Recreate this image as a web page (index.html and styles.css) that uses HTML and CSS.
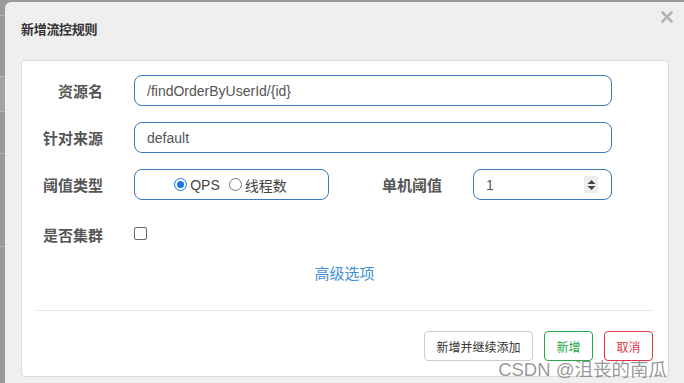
FILE: index.html
```html
<!DOCTYPE html>
<html lang="zh">
<head>
<meta charset="utf-8">
<title>新增流控规则</title>
<link rel="stylesheet" href="styles.css">
</head>
<body>
<div class="backdrop">
  <div class="bg-line l1"></div>
  <div class="bg-band"></div>
  <div class="bg-line l3"></div>
  <div class="bg-line l4"></div>
</div>
<div class="modal">
  <div class="modal-header">
    <h4 class="modal-title">新增流控规则</h4>
    <button class="close" type="button" aria-label="close">
      <svg width="12" height="12" viewBox="0 0 12 12"><path d="M1.5 1.5 L10.5 10.5 M10.5 1.5 L1.5 10.5" stroke="#b3b3b3" stroke-width="2.6" stroke-linecap="square"/></svg>
    </button>
  </div>
  <div class="card">
    <div class="form">
      <div class="row">
        <label class="label">资源名</label>
        <div class="input wide">/findOrderByUserId/{id}</div>
      </div>
      <div class="row">
        <label class="label">针对来源</label>
        <div class="input wide">default</div>
      </div>
      <div class="row">
        <label class="label">阈值类型</label>
        <div class="input radios">
          <span class="radio checked"></span><span class="rtext">QPS</span>
          <span class="radio"></span><span class="rtext">线程数</span>
        </div>
        <label class="label label2">单机阈值</label>
        <div class="input number">
          <span>1</span>
          <span class="spin">
            <svg width="13" height="16" viewBox="0 0 13 16"><path d="M2.5 7 L6.5 3 L10.5 7 Z M2.5 9 L6.5 13 L10.5 9 Z" fill="#444"/></svg>
          </span>
        </div>
      </div>
      <div class="row check-row">
        <label class="label">是否集群</label>
        <span class="checkbox"></span>
      </div>
      <div class="advanced"><a class="link">高级选项</a></div>
    </div>
    <div class="divider"></div>
    <div class="footer">
      <button class="btn btn-default">新增并继续添加</button>
      <button class="btn btn-green">新增</button>
      <button class="btn btn-red">取消</button>
    </div>
    <div class="watermark">CSDN @沮丧的南瓜</div>
  </div>
</div>
</body>
</html>
```

FILE: styles.css
```css
* { box-sizing: border-box; }
html, body {
  margin: 0;
  padding: 0;
  width: 684px;
  height: 383px;
  overflow: hidden;
  background: #9a9a9a;
  font-family: "Liberation Sans", "Noto Sans CJK SC", sans-serif;
}
.backdrop {
  position: absolute;
  left: 0; top: 0;
  width: 6px; height: 383px;
}
.bg-line { position: absolute; left: 0; width: 6px; height: 1px; background: #b4b4b4; }
.l1 { top: 15px; }
.l3 { top: 153px; }
.l4 { top: 246px; }
.bg-band { position: absolute; left: 0; top: 76px; width: 6px; height: 36px; background: #a3a3a3; border-top: 1px solid #b4b4b4; border-bottom: 1px solid #b4b4b4; }

.modal {
  position: relative;
  margin: 2px 0 0 5px;
  height: 381px;
  background: #efefef;
  border-radius: 6px 0 0 0;
  padding: 0 15px 0 16px;
}
.modal-header {
  height: 58px;
  display: flex;
  align-items: flex-start;
  justify-content: space-between;
}
.modal-title {
  margin: 17px 0 0 0;
  font-size: 13px;
  font-weight: bold;
  color: #333;
  font-family: "Noto Sans CJK SC", sans-serif;
  letter-spacing: -0.3px;
}
.close {
  border: 0;
  background: none;
  padding: 0;
  margin: 9px -4px 0 0;
  width: 12px; height: 12px;
  line-height: 0;
}
.card {
  position: relative;
  background: #fff;
  border: 1px solid #dcdcdc;
  border-radius: 4px;
  height: 317px;
  padding: 14px 15px 0 14px;
}
.form { display: flex; flex-direction: column; gap: 16px; }
.row { display: flex; align-items: center; height: 31px; }
.label {
  width: 67px;
  text-align: right;
  font-family: "Noto Sans CJK SC", sans-serif;
  font-weight: bold;
  font-size: 15px;
  color: #555;
  margin-right: 31px;
  flex: none;
}
.label2 { width: 113px; margin-right: 31px; }
.input {
  height: 31px;
  border: 1px solid #3b78b5;
  border-radius: 8px;
  display: flex;
  align-items: center;
  padding: 0 12px;
  font-size: 14px;
  color: #555;
}
.wide { width: 478px; }
.radios { width: 195px; justify-content: center; padding: 0 2px 0 0; }
.radio {
  width: 13px; height: 13px;
  border: 1px solid #777;
  border-radius: 50%;
  display: inline-block;
  margin-right: 3px;
  position: relative;
}
.radio.checked { border-color: #1a73e8; }
.radio.checked::after {
  content: "";
  position: absolute;
  left: 2px; top: 2px;
  width: 7px; height: 7px;
  border-radius: 50%;
  background: #1a73e8;
}
.rtext { margin-right: 9px; color: #444; font-family: "Liberation Sans", "Noto Sans CJK SC", sans-serif; }
.rtext:last-child { margin-right: 0; }
.number { width: 139px; justify-content: space-between; padding-right: 13px; }
.spin { width: 14px; height: 17px; background: #ececec; display: flex; align-items: center; justify-content: center; }
.check-row { margin-top: 3px; height: 30px; }
.checkbox {
  width: 13px; height: 13px;
  border: 1px solid #666;
  border-radius: 2px;
  display: inline-block;
  margin-top: -1px;
}
.advanced { text-align: center; margin-top: -3px; height: 22px; }
.link {
  color: #3f8ed8;
  font-size: 15px;
  font-family: "Noto Sans CJK SC", sans-serif;
}
.divider { height: 1px; background: #e3e3e3; margin-top: 26px; }
.footer {
  display: flex;
  justify-content: flex-end;
  gap: 11px;
  margin-top: 20px;
  padding-right: 0;
}
.btn {
  height: 30px;
  background: #fff;
  border-radius: 4px;
  font-size: 12px;
  font-family: "Noto Sans CJK SC", sans-serif;
  padding: 0 11px;
  border: 1px solid #ccc;
  color: #333;
}
.btn-default { width: 109px; }
.btn-green { width: 49px; border-color: #28a745; color: #28a745; padding: 0; }
.btn-red { width: 49px; border-color: #dc3545; color: #dc3545; padding: 0; }
.watermark {
  position: absolute;
  right: 1px;
  bottom: -5px;
  font-size: 18.5px;
  color: rgba(120, 120, 120, 0.75);
  font-family: "Liberation Sans", "Noto Sans CJK SC", sans-serif;
  white-space: nowrap;
}
```
